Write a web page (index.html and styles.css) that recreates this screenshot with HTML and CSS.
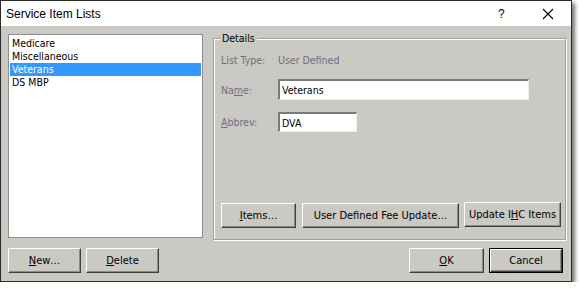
FILE: index.html
```html
<!DOCTYPE html>
<html>
<head>
<meta charset="utf-8">
<link rel="stylesheet" href="styles.css">
</head>
<body>
<div class="window">
  <div class="titlebar">
    <span class="title">Service Item Lists</span>
    <span class="help">?</span>
    <span class="close">
      <svg width="12" height="12" viewBox="0 0 12 12"><path d="M1 1 L11 11 M11 1 L1 11" stroke="#000" stroke-width="1.1" fill="none"/></svg>
    </span>
  </div>
  <div class="body">
    <div class="main">
      <div class="listbox">
        <div class="item">Medicare</div>
        <div class="item">Miscellaneous</div>
        <div class="item selected">Veterans</div>
        <div class="item">DS MBP</div>
      </div>
      <div class="group">
        <span class="legend">Details</span>
        <div class="row row-type">
          <span class="label">List Type:</span>
          <span class="value">User Defined</span>
        </div>
        <div class="row row-name">
          <span class="label">Na<u>m</u>e:</span>
          <div class="input input-name">Veterans</div>
        </div>
        <div class="row row-abbrev">
          <span class="label"><u>A</u>bbrev:</span>
          <div class="input input-abbrev">DVA</div>
        </div>
        <div class="group-buttons">
          <div class="btn btn-items"><u>I</u>tems…</div>
          <div class="btn btn-fee">User Defined Fee Update…</div>
          <div class="btn btn-ihc">Update I<u>H</u>C Items</div>
        </div>
      </div>
    </div>
    <div class="footer">
      <div class="left-buttons">
        <div class="btn btn-foot"><u>N</u>ew…</div>
        <div class="btn btn-foot"><u>D</u>elete</div>
      </div>
      <div class="right-buttons">
        <div class="btn btn-ok"><u>O</u>K</div>
        <div class="default-wrap"><div class="btn btn-cancel">Cancel</div></div>
      </div>
    </div>
  </div>
</div>
</body>
</html>
```

FILE: styles.css
```css
html, body {
  margin: 0;
  padding: 0;
  background: #ffffff;
}
body {
  font-family: "DejaVu Sans Condensed", "DejaVu Sans", sans-serif;
  font-size: 10.5px;
  color: #000;
}
.window {
  width: 570px;
  height: 280px;
  border: 1px solid #2b2b2b;
  background: #cbc9c4;
  box-shadow: 3px 3px 4px rgba(0,0,0,0.55);
  display: flex;
  flex-direction: column;
}
.titlebar {
  height: 25px;
  background: #ffffff;
  display: flex;
  align-items: center;
}
.title {
  font-family: "Liberation Sans", Arial, sans-serif;
  font-size: 12px;
  padding-left: 5px;
  flex: 1;
  margin-top: 1px;
}
.help {
  font-family: "Liberation Sans", Arial, sans-serif;
  font-size: 12px;
  width: 12px;
  margin-right: 32px;
  margin-top: 1px;
}
.close {
  width: 12px;
  height: 12px;
  margin-right: 17px;
  display: flex;
}
.body {
  flex: 1;
  padding: 8px 5px 0 7px;
  display: flex;
  flex-direction: column;
}
.main {
  display: flex;
  height: 206px;
  gap: 10px;
}
.listbox {
  flex-shrink: 0;
  width: 193px;
  height: 200px;
  border: 1px solid #8d8d8d;
  background: #ffffff;
  padding-top: 2px;
}
.item {
  height: 13px;
  line-height: 13px;
  margin: 0 1px;
  padding-left: 2px;
  white-space: nowrap;
}
.item.selected {
  background: #3399ff;
  color: #ffffff;
}
.group {
  flex-shrink: 0;
  position: relative;
  box-sizing: border-box;
  margin-top: 4px;
  width: 353px;
  height: 202px;
  border: 1px solid #a0a0a0;
  box-shadow: 1px 1px 0 #ffffff, inset 1px 1px 0 #ffffff;
  padding: 0 7px;
  display: flex;
  flex-direction: column;
}
.legend {
  position: absolute;
  left: 6px;
  top: -7px;
  background: #cbc9c4;
  padding: 0 2px;
  line-height: 13px;
}
.row {
  display: flex;
  align-items: center;
}
.label {
  width: 57px;
  flex-shrink: 0;
  color: #6b6f86;
  white-space: nowrap;
}
.value {
  color: #6b6f86;
}
.row-type {
  margin-top: 14px;
  height: 13px;
}
.row-name {
  margin-top: 13px;
}
.row-abbrev {
  margin-top: 12px;
}
.input {
  height: 21px;
  box-sizing: border-box;
  background: #ffffff;
  border-top: 2px solid #7b7b7b;
  border-left: 2px solid #7b7b7b;
  border-right: 1px solid #eeeeee;
  border-bottom: 1px solid #eeeeee;
  padding-left: 2px;
  line-height: 18px;
}
.input-name {
  width: 251px;
}
.input-abbrev {
  width: 79px;
  height: 20px;
}
.group-buttons {
  margin-top: auto;
  margin-bottom: 11px;
  display: flex;
  align-items: flex-end;
  gap: 6px;
}
.btn {
  flex-shrink: 0;
  box-sizing: border-box;
  height: 25px;
  background: #cbc9c4;
  border-top: 1px solid #ffffff;
  border-left: 1px solid #ffffff;
  border-right: 1px solid #404040;
  border-bottom: 1px solid #404040;
  box-shadow: inset -1px -1px 0 #8a8a8a;
  display: flex;
  align-items: center;
  justify-content: center;
  white-space: nowrap;
  padding-bottom: 1px;
  font-size: 11px;
}
.btn-items {
  width: 75px;
}
.btn-fee {
  width: 157px;
}
.btn-ihc {
  width: 97px;
  margin-left: -1px;
  margin-bottom: 1px;
}
.footer {
  margin-top: 8px;
  display: flex;
  justify-content: space-between;
}
.left-buttons, .right-buttons {
  display: flex;
  gap: 5px;
  align-items: flex-start;
}
.right-buttons {
  margin-right: 3px;
}
.btn-foot {
  width: 73px;
}
.btn-ok {
  width: 75px;
}
.default-wrap {
  border: 1px solid #000;
}
.btn-cancel {
  width: 72px;
  height: 23px;
}
```
